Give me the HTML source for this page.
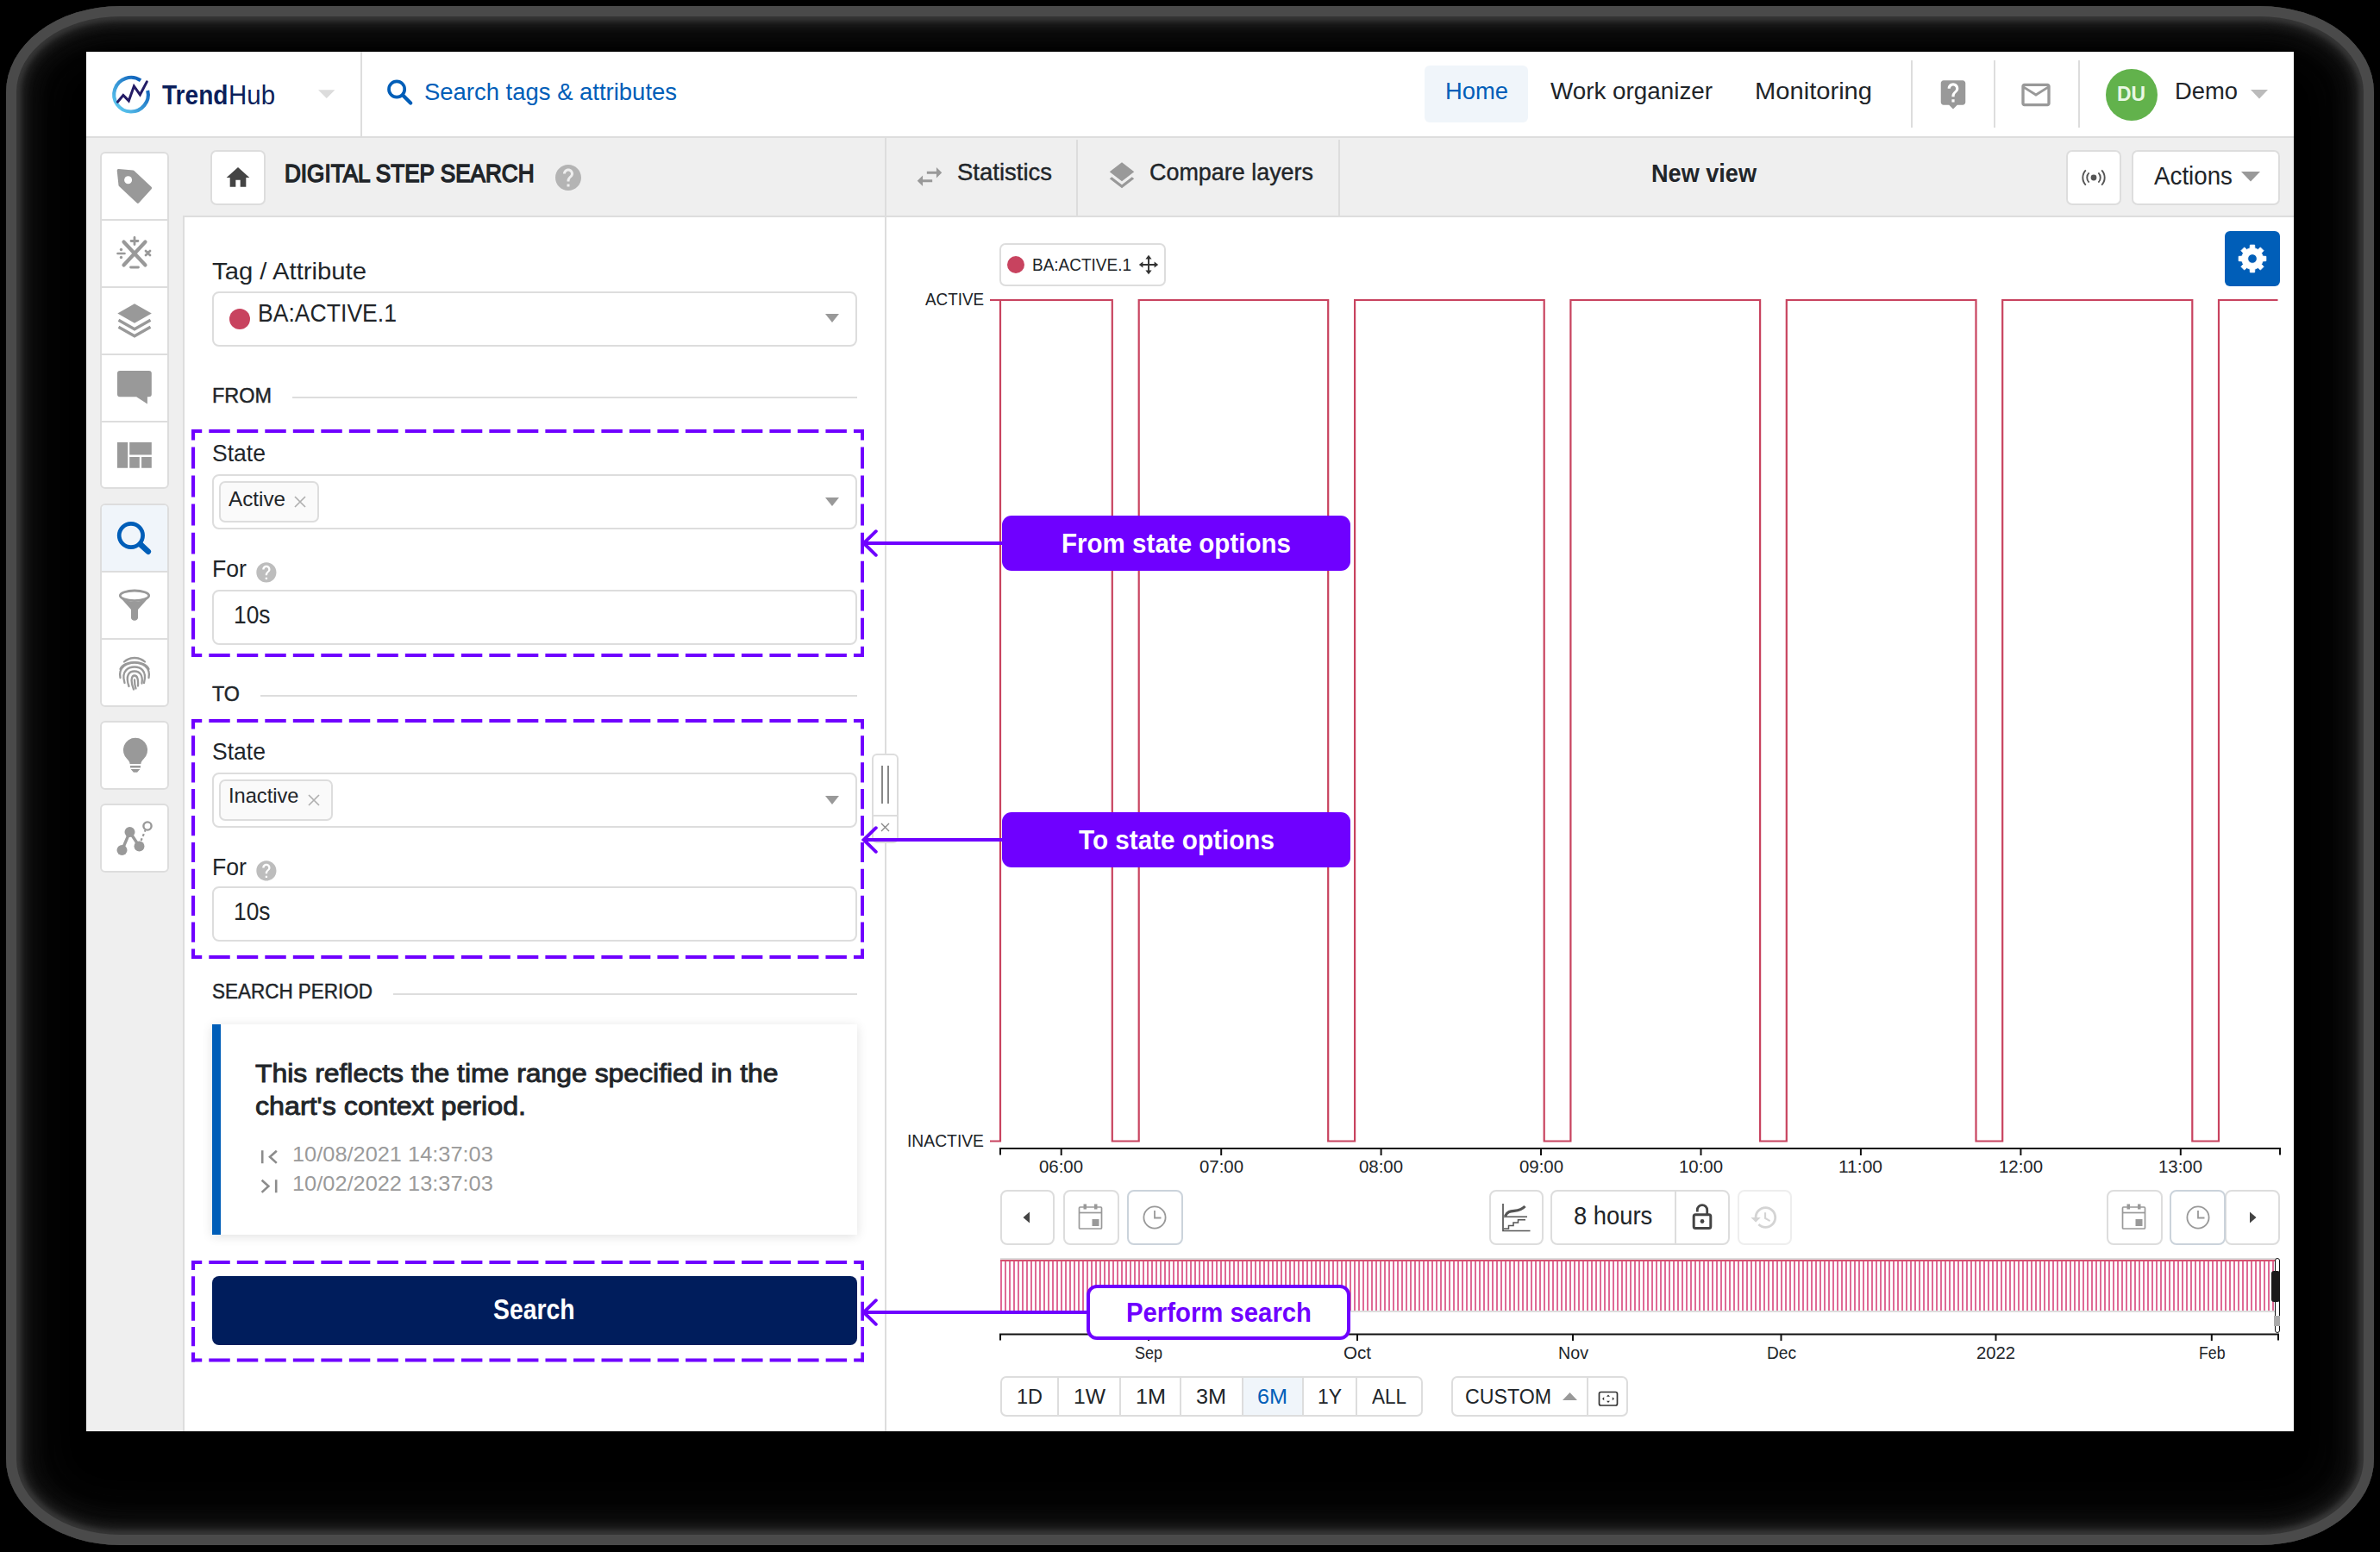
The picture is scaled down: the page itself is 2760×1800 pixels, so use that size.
<!DOCTYPE html>
<html><head><meta charset="utf-8"><title>TrendHub - Digital step search</title>
<style>
html,body{margin:0;padding:0;background:#000;overflow:hidden;}
#stage{position:relative;width:2760px;height:1800px;overflow:hidden;background:#000;font-family:"Liberation Sans", sans-serif;}
#stage div,#stage svg,#stage span.t{position:absolute;box-sizing:border-box;}
span.t{white-space:pre;transform-origin:0 50%;}
.btn{background:#fff;border:2px solid #dddddd;border-radius:6px;}
</style></head>
<body>
<div id="stage">
<div style="left:7px;top:7px;width:2746px;height:1785px;border-radius:132px / 100px;background:#000;box-shadow:inset 0 0 0 12px #4a4a4a, inset 0 0 5px 17px #363636, inset 0 0 8px 23px #1f1f1f, inset 0 0 20px 32px #111111, inset 0 0 40px 52px #070707;"></div>
<div style="left:100px;top:60px;width:2560px;height:1600px;background:#fff;"></div>
<div style="left:100px;top:158px;width:2560px;height:94px;background:#efefef;border-top:2px solid #dddddd;border-bottom:2px solid #dddddd;"></div>
<div style="left:100px;top:160px;width:114px;height:1500px;background:#efefef;"></div>
<div style="left:212px;top:250px;width:2px;height:1410px;background:#dddddd;"></div>
<div style="left:1026px;top:160px;width:2px;height:1500px;background:#dddddd;"></div>
<svg style="left:126px;top:84px;" width="52" height="52" viewBox="126 84 52 52"><defs><linearGradient id="lg" x1="0" y1="1" x2="1" y2="0"><stop offset="0.1" stop-color="#5cc6ee"/><stop offset="0.9" stop-color="#0a5cb8"/></linearGradient></defs>
<path d="M163.07 93.29A19.8 19.8 0 1 0 171.21 104.91" fill="none" stroke="url(#lg)" stroke-width="4.100"/>
<path d="M136.400 118.200L142.900 110.500L149.300 116.900L155.400 100L162.400 109.800L170.300 94.900" fill="none" stroke="#241c66" stroke-width="3" stroke-linejoin="miter" stroke-linecap="round"/></svg>
<span class="t" style="left:188.30px;top:94.68px;font-size:30.5px;line-height:30.5px;color:#0b1f5b;font-weight:700;transform:scaleX(0.9212);">Trend</span>
<span class="t" style="left:265.30px;top:94.68px;font-size:30.5px;line-height:30.5px;color:#0b1f5b;transform:scaleX(0.9651);">Hub</span>
<svg style="left:368.5px;top:104px;" width="19.5" height="10" viewBox="0 0 20 10"><path d="M0 0h20L10 10z" fill="#dcdcdc"/></svg>
<div style="left:418px;top:60px;width:2px;height:98px;background:#dddddd;"></div>
<svg style="left:444px;top:88px;" width="40" height="40" viewBox="444 88 40 40"><circle cx="460.100" cy="103.500" r="9.100" fill="none" stroke="#005eb8" stroke-width="3.700"/><path d="M467 110.300L476.200 119.500" stroke="#005eb8" stroke-width="4.300" stroke-linecap="round"/></svg>
<span class="t" style="left:492.00px;top:92.80px;font-size:28px;line-height:28px;color:#005eb8;transform:scaleX(0.9805);">Search tags &amp; attributes</span>
<div style="left:1652px;top:76px;width:120px;height:66px;background:#f0f5fa;border-radius:6px;"></div>
<span class="t" style="left:1676.00px;top:92.30px;font-size:28px;line-height:28px;color:#005eb8;transform:scaleX(0.9772);">Home</span>
<span class="t" style="left:1798.00px;top:92.30px;font-size:28px;line-height:28px;color:#212529;transform:scaleX(0.9930);">Work organizer</span>
<span class="t" style="left:2035.00px;top:92.30px;font-size:28px;line-height:28px;color:#212529;transform:scaleX(1.0403);">Monitoring</span>
<div style="left:2216px;top:70px;width:2px;height:78px;background:#dddddd;"></div>
<div style="left:2312px;top:70px;width:2px;height:78px;background:#dddddd;"></div>
<div style="left:2410px;top:70px;width:2px;height:78px;background:#dddddd;"></div>
<svg style="left:2245.5px;top:89.5px;" width="38" height="38" viewBox="0 0 24 24"><path fill="#999999" d="M19 2H5c-1.11 0-2 .9-2 2v14c0 1.1.89 2 2 2h4l3 3 3-3h4c1.1 0 2-.9 2-2V4c0-1.1-.9-2-2-2zm-6 16h-2v-2h2v2zm2.07-7.75l-.9.92C13.45 11.9 13 12.5 13 14h-2v-.5c0-1.1.45-2.1 1.17-2.83l1.24-1.26c.37-.36.59-.86.59-1.41 0-1.1-.9-2-2-2s-2 .9-2 2H8c0-2.21 1.79-4 4-4s4 1.79 4 4c0 .88-.36 1.68-.93 2.25z"/></svg>
<svg style="left:2341px;top:89.5px;" width="40" height="40" viewBox="0 0 24 24"><path fill="#999999" d="M20 4H4c-1.1 0-1.99.9-1.99 2L2 18c0 1.1.9 2 2 2h16c1.1 0 2-.9 2-2V6c0-1.1-.9-2-2-2zm0 14H4V8l8 5 8-5v10zm-8-7L4 6h16l-8 5z"/></svg>
<div style="left:2441.5px;top:80px;width:60px;height:60px;background:#62b24c;border-radius:50%;"></div>
<span class="t" style="left:2455.00px;top:96.68px;font-size:24px;line-height:24px;color:#e9f7e4;font-weight:700;transform:scaleX(0.9518);">DU</span>
<span class="t" style="left:2522.00px;top:92.30px;font-size:28px;line-height:28px;color:#212529;transform:scaleX(0.9772);">Demo</span>
<svg style="left:2610px;top:104px;" width="20" height="11" viewBox="0 0 20 11"><path d="M0 0h20L10 10.5z" fill="#bbbbbb"/></svg>
<div class="btn" style="left:244px;top:174px;width:64px;height:64px;border-radius:7px;"></div>
<svg style="left:260px;top:190px;" width="32" height="32" viewBox="0 0 24 24"><path fill="#444444" d="M10 20v-6h4v6h5v-8h3L12 3 2 12h3v8z"/></svg>
<span class="t" style="left:329.50px;top:187.09px;font-size:28.6px;line-height:28.6px;color:#212529;transform:scaleX(0.9125);-webkit-text-stroke:1.500px #212529;">DIGITAL STEP SEARCH</span>
<svg style="left:641px;top:188px;" width="36" height="36" viewBox="0 0 24 24"><path fill="#b4b4b4" d="M12 2C6.48 2 2 6.48 2 12s4.48 10 10 10 10-4.48 10-10S17.52 2 12 2zm1 17h-2v-2h2v2zm2.07-7.75l-.9.92C13.45 12.9 13 13.5 13 15h-2v-.5c0-1.1.45-2.1 1.17-2.83l1.24-1.26c.37-.36.59-.86.59-1.41 0-1.1-.9-2-2-2s-2 .9-2 2H8c0-2.21 1.79-4 4-4s4 1.79 4 4c0 .88-.36 1.68-.93 2.25z"/></svg>
<div style="left:1248px;top:162px;width:2px;height:88px;background:#dddddd;"></div>
<div style="left:1552px;top:162px;width:2px;height:88px;background:#dddddd;"></div>
<svg style="left:1059px;top:186px;" width="38" height="38" viewBox="0 0 24 24"><path fill="#999999" d="M6.99 11L3 15l3.99 4v-3H14v-2H6.99v-3zM21 9l-3.99-4v3H10v2h7.01v3L21 9z"/></svg>
<span class="t" style="left:1110.00px;top:185.80px;font-size:28px;line-height:28px;color:#212529;font-weight:500;transform:scaleX(0.9819);-webkit-text-stroke:0.4px #212529;">Statistics</span>
<svg style="left:1282px;top:185px;" width="38" height="38" viewBox="0 0 24 24"><path fill="#999999" d="M11.99 18.54l-7.37-5.73L3 14.07l9 7 9-7-1.63-1.27-7.38 5.74zM12 16l7.36-5.73L21 9l-9-7-9 7 1.63 1.27L12 16z"/></svg>
<span class="t" style="left:1333.00px;top:185.80px;font-size:28px;line-height:28px;color:#212529;font-weight:500;transform:scaleX(0.9613);-webkit-text-stroke:0.4px #212529;">Compare layers</span>
<span class="t" style="left:1915.00px;top:187.45px;font-size:29px;line-height:29px;color:#212529;font-weight:700;transform:scaleX(0.9344);">New view</span>
<div class="btn" style="left:2396px;top:174px;width:64px;height:64px;border-radius:7px;"></div>
<svg style="left:2410px;top:188px;" width="36" height="36" viewBox="0 0 36 36"><circle cx="18" cy="18" r="3.4" fill="#555"/><path d="M12.6 12.4a7.8 7.8 0 0 0 0 11.2M23.4 12.4a7.8 7.8 0 0 1 0 11.2M8.8 9.4a12.4 12.4 0 0 0 0 17.2M27.2 9.4a12.4 12.4 0 0 1 0 17.2" fill="none" stroke="#555" stroke-width="1.9"/></svg>
<div class="btn" style="left:2472px;top:174px;width:172px;height:64px;border-radius:7px;"></div>
<span class="t" style="left:2498.00px;top:188.60px;font-size:30px;line-height:30px;color:#212529;transform:scaleX(0.9249);">Actions</span>
<svg style="left:2599px;top:199px;" width="22" height="12" viewBox="0 0 22 12"><path d="M0 0h22L11 11.5z" fill="#999999"/></svg>
<div class="btn" style="left:116px;top:176px;width:80px;height:391px;border-radius:6px;"></div>
<div style="left:118px;top:254px;width:76px;height:2px;background:#dddddd;"></div>
<div style="left:118px;top:332px;width:76px;height:2px;background:#dddddd;"></div>
<div style="left:118px;top:410px;width:76px;height:2px;background:#dddddd;"></div>
<div style="left:118px;top:488px;width:76px;height:2px;background:#dddddd;"></div>
<div class="btn" style="left:116px;top:584px;width:80px;height:236px;border-radius:6px;"></div>
<div style="left:118px;top:586px;width:76px;height:76px;background:#f0f5fa;border-radius:4px 4px 0 0;"></div>
<div style="left:118px;top:662px;width:76px;height:2px;background:#dddddd;"></div>
<div style="left:118px;top:740px;width:76px;height:2px;background:#dddddd;"></div>
<div class="btn" style="left:116px;top:836px;width:80px;height:80px;border-radius:6px;"></div>
<div class="btn" style="left:116px;top:932px;width:80px;height:80px;border-radius:6px;"></div>
<svg style="left:130px;top:190px;" width="52" height="52" viewBox="130 190 52 52"><path d="M137.500 197.700L154.300 199.300L174.300 218L159.800 234L139.300 214.800Z" fill="#999999" stroke="#999999" stroke-width="3.600" stroke-linejoin="round"/><circle cx="148.600" cy="208.700" r="4.500" fill="#fff"/></svg>
<svg style="left:134px;top:274px;" width="44" height="40" viewBox="0 0 44 40"><g stroke="#999" fill="none" stroke-linecap="round"><path d="M9.500 6.500L34.500 33.500M34.500 6.500L9.500 33.500" stroke-width="4.200"/><path d="M22 1.500v8M18 5.500h8" stroke-width="2.800"/><path d="M17.500 36h9" stroke-width="2.800"/><path d="M2.500 20h8" stroke-width="2.600"/><path d="M35 17l5 5M40 17l-5 5" stroke-width="2.800"/></g><circle cx="6.500" cy="15.500" r="1.700" fill="#999"/><circle cx="6.500" cy="24.500" r="1.700" fill="#999"/></svg>
<svg style="left:130px;top:346px;" width="52" height="52" viewBox="130 346 52 52"><path d="M136.300 363.500L156 352.200L175.800 363.500L156 374.800Z" fill="#999999"/><path d="M137.500 371.300L156 381.800L174.500 371.300" fill="none" stroke="#999999" stroke-width="3.300"/><path d="M137.500 379.300L156 389.800L174.500 379.300" fill="none" stroke="#999999" stroke-width="3.300"/></svg>
<svg style="left:130px;top:424px;" width="52" height="52" viewBox="130 424 52 52"><path d="M139 430h33.800a3 3 0 0 1 3 3v24.300a3 3 0 0 1 -3 3h-1.900v8.300l-12.700-8.300H139a3 3 0 0 1 -3-3V433a3 3 0 0 1 3-3z" fill="#999999"/></svg>
<svg style="left:130px;top:506px;" width="52" height="44" viewBox="130 506 52 44"><path d="M136 513h12.200v29.800H136zM150.200 513h25.600v14.400h-25.600zM150.200 529.900h11.600v12.900h-11.600zM164.100 529.900h11.700v12.900h-11.700z" fill="#999999"/></svg>
<svg style="left:130px;top:598px;" width="56" height="56" viewBox="130 598 56 56"><circle cx="151.900" cy="621" r="13.700" fill="none" stroke="#005eb8" stroke-width="4.700"/><path d="M163 631.500L171.800 639.700" stroke="#005eb8" stroke-width="6.600" stroke-linecap="round"/></svg>
<svg style="left:136px;top:682px;" width="40" height="40" viewBox="0 0 40 40"><ellipse cx="20" cy="8.800" rx="16.700" ry="5.800" fill="none" stroke="#999" stroke-width="2.800"/><path d="M4 11.500L16 25v9.500c0 2 1.800 3.200 4 3.200s4-1.200 4-3.200V25L36 11.500C31 14.600 26 15.600 20 15.600S9 14.600 4 11.500z" fill="#999"/></svg>
<svg style="left:136px;top:759px;" width="40" height="42" viewBox="0 0 40 42"><g fill="none" stroke="#999" stroke-width="2.300" stroke-linecap="round"><path d="M8 8.500C15 2.500 25 2.500 32 8.500"/><path d="M3.500 17C8 6.500 32 6.500 36.500 17"/><path d="M3.500 27C1 14 12 9.500 20 9.500s19 4.500 16.500 17.500"/><path d="M8.500 33C4 18 14 14.500 20 14.500S35 18 31 33"/><path d="M13.500 37C9 24 14 19.500 20 19.500s10 4.500 8.500 14"/><path d="M19 40.500C15 31 16.500 24.500 20 24.500s4.500 5 4 12"/><path d="M20 29.500c0 4 .5 7 1.500 10"/></g></svg>
<svg style="left:136px;top:850px;" width="42" height="52" viewBox="136 850 42 52"><path d="M157 855.800a14.100 14.100 0 0 1 9.400 24.600c-1.700 1.600-2.700 3-3 5.600h-12.800c-.3-2.600-1.300-4-3-5.600a14.100 14.100 0 0 1 9.400-24.600z" fill="#999999"/><path d="M151 888h12v2.600h-12zM151.600 892h10.800l-3.300 3.700h-4.200z" fill="#999999"/></svg>
<svg style="left:134px;top:950px;" width="44" height="44" viewBox="0 0 44 44"><path d="M7.500 36L16.500 15L27.500 31.500" fill="none" stroke="#999" stroke-width="3.400" stroke-linejoin="round"/><circle cx="7.500" cy="36" r="6" fill="#999"/><circle cx="16.500" cy="15" r="6" fill="#999"/><circle cx="27.500" cy="31.500" r="6" fill="#999"/><path d="M29.500 25l5-12" stroke="#999" stroke-width="2.200" stroke-dasharray="3 2.600" fill="none"/><circle cx="37" cy="8" r="4.600" fill="#fff" stroke="#999" stroke-width="2.400"/></svg>
<span class="t" style="left:246.00px;top:300.80px;font-size:28px;line-height:28px;color:#212529;transform:scaleX(1.0454);">Tag / Attribute</span>
<div class="btn" style="left:246px;top:338px;width:748px;height:64px;border-radius:8px;"></div>
<div style="left:265.5px;top:358px;width:24px;height:24px;background:#c8435f;border-radius:50%;"></div>
<span class="t" style="left:299.00px;top:349.45px;font-size:29px;line-height:29px;color:#212529;transform:scaleX(0.9165);">BA:ACTIVE.1</span>
<svg style="left:957px;top:364px;" width="16" height="10" viewBox="0 0 16 10"><path d="M0 0h16L8 10z" fill="#999999"/></svg>
<span class="t" style="left:246.00px;top:447.26px;font-size:24.5px;line-height:24.5px;color:#212529;transform:scaleX(0.9567);-webkit-text-stroke:0.45px #212529;">FROM</span>
<div style="left:339px;top:460px;width:655px;height:2px;background:#dddddd;"></div>
<span class="t" style="left:246.00px;top:793.46px;font-size:24.5px;line-height:24.5px;color:#212529;transform:scaleX(0.9526);-webkit-text-stroke:0.45px #212529;">TO</span>
<div style="left:302px;top:806px;width:692px;height:2px;background:#dddddd;"></div>
<span class="t" style="left:246.00px;top:1137.86px;font-size:24.5px;line-height:24.5px;color:#212529;transform:scaleX(0.9170);-webkit-text-stroke:0.45px #212529;">SEARCH PERIOD</span>
<div style="left:456px;top:1152px;width:538px;height:2px;background:#dddddd;"></div>
<span class="t" style="left:246.00px;top:512.30px;font-size:28px;line-height:28px;color:#212529;transform:scaleX(0.9481);">State</span>
<div class="btn" style="left:246px;top:550px;width:748px;height:64px;border-radius:8px;"></div>
<div style="left:254px;top:558px;width:115.5px;height:47.5px;background:#fafafa;border:2px solid #dddddd;border-radius:7px;"></div>
<span class="t" style="left:264.50px;top:567.26px;font-size:24.5px;line-height:24.5px;color:#212529;transform:scaleX(0.9892);">Active</span>
<svg style="left:341.0px;top:574.5px;" width="14" height="14" viewBox="0 0 14 14"><path d="M1 1l12 12M13 1l-12 12" stroke="#b0b0b0" stroke-width="1.700" fill="none"/></svg>
<svg style="left:957px;top:577px;" width="16" height="10" viewBox="0 0 16 10"><path d="M0 0h16L8 10z" fill="#999999"/></svg>
<span class="t" style="left:246.00px;top:646.10px;font-size:28px;line-height:28px;color:#212529;transform:scaleX(0.9524);">For</span>
<svg style="left:294.8px;top:650px;" width="27.8" height="27.8" viewBox="0 0 24 24"><path fill="#bdbdbd" d="M12 2C6.48 2 2 6.48 2 12s4.48 10 10 10 10-4.48 10-10S17.52 2 12 2zm1 17h-2v-2h2v2zm2.07-7.750l-.9.920C13.450 12.900 13 13.500 13 15h-2v-.5c0-1.100.450-2.100 1.170-2.830l1.240-1.260c.370-.360.590-.860.590-1.410 0-1.100-.9-2-2-2s-2 .9-2 2H8c0-2.210 1.790-4 4-4s4 1.790 4 4c0 .880-.360 1.680-.930 2.250z"/></svg>
<div class="btn" style="left:246px;top:684px;width:748px;height:64px;border-radius:8px;"></div>
<span class="t" style="left:270.50px;top:699.45px;font-size:29px;line-height:29px;color:#212529;transform:scaleX(0.9088);">10s</span>
<svg style="left:221.9px;top:497.9px;" width="780.20" height="264.10" viewBox="0 0 780.20 264.10"><g fill="none" stroke="#6f00ff" stroke-width="4.1"><path d="M0 2.05H780.20" stroke-dasharray="24.446 8.062" stroke-dashoffset="12.223"/><path d="M0 262.05H780.20" stroke-dasharray="24.446 8.062" stroke-dashoffset="12.223"/><path d="M2.05 0V264.10" stroke-dasharray="24.825 8.187" stroke-dashoffset="12.413"/><path d="M778.15 0V264.10" stroke-dasharray="24.825 8.187" stroke-dashoffset="12.413"/></g></svg>
<span class="t" style="left:246.00px;top:858.30px;font-size:28px;line-height:28px;color:#212529;transform:scaleX(0.9481);">State</span>
<div class="btn" style="left:246px;top:896px;width:748px;height:64px;border-radius:8px;"></div>
<div style="left:254px;top:904px;width:131.5px;height:47.5px;background:#fafafa;border:2px solid #dddddd;border-radius:7px;"></div>
<span class="t" style="left:264.50px;top:911.26px;font-size:24.5px;line-height:24.5px;color:#212529;transform:scaleX(0.9652);">Inactive</span>
<svg style="left:357.0px;top:920.5px;" width="14" height="14" viewBox="0 0 14 14"><path d="M1 1l12 12M13 1l-12 12" stroke="#b0b0b0" stroke-width="1.700" fill="none"/></svg>
<svg style="left:957px;top:923px;" width="16" height="10" viewBox="0 0 16 10"><path d="M0 0h16L8 10z" fill="#999999"/></svg>
<span class="t" style="left:246.00px;top:992.10px;font-size:28px;line-height:28px;color:#212529;transform:scaleX(0.9524);">For</span>
<svg style="left:294.8px;top:996px;" width="27.8" height="27.8" viewBox="0 0 24 24"><path fill="#bdbdbd" d="M12 2C6.48 2 2 6.48 2 12s4.48 10 10 10 10-4.48 10-10S17.52 2 12 2zm1 17h-2v-2h2v2zm2.07-7.750l-.9.920C13.450 12.900 13 13.500 13 15h-2v-.5c0-1.100.450-2.100 1.170-2.830l1.240-1.260c.370-.360.590-.860.590-1.410 0-1.100-.9-2-2-2s-2 .9-2 2H8c0-2.210 1.790-4 4-4s4 1.790 4 4c0 .880-.360 1.680-.930 2.250z"/></svg>
<div class="btn" style="left:246px;top:1028px;width:748px;height:64px;border-radius:8px;"></div>
<span class="t" style="left:270.50px;top:1043.45px;font-size:29px;line-height:29px;color:#212529;transform:scaleX(0.9088);">10s</span>
<svg style="left:221.9px;top:833.9px;" width="780.20" height="278.10" viewBox="0 0 780.20 278.10"><g fill="none" stroke="#6f00ff" stroke-width="4.1"><path d="M0 2.05H780.20" stroke-dasharray="24.446 8.062" stroke-dashoffset="12.223"/><path d="M0 276.05H780.20" stroke-dasharray="24.446 8.062" stroke-dashoffset="12.223"/><path d="M2.05 0V278.10" stroke-dasharray="23.237 7.663" stroke-dashoffset="11.618"/><path d="M778.15 0V278.10" stroke-dasharray="23.237 7.663" stroke-dashoffset="11.618"/></g></svg>
<div style="left:245.7px;top:1188px;width:748.3px;height:244px;background:#fff;box-shadow:0 2px 12px rgba(0,0,0,0.12);"></div>
<div style="left:245.7px;top:1188px;width:10.4px;height:244px;background:#005eb8;"></div>
<span class="t" style="left:296.40px;top:1230.31px;font-size:30px;line-height:30px;color:#212529;transform:scaleX(1.0635);-webkit-text-stroke:0.9px #212529;">This reflects the time range specified in the</span>
<span class="t" style="left:296.40px;top:1267.81px;font-size:30px;line-height:30px;color:#212529;transform:scaleX(1.0733);-webkit-text-stroke:0.9px #212529;">chart's context period.</span>
<svg style="left:300px;top:1330px;" width="26" height="24" viewBox="0 0 26 24"><path d="M4.200 4.300v15M20.800 4.700L13 11.800l7.800 7.100" fill="none" stroke="#8c8c8c" stroke-width="2.600"/></svg>
<svg style="left:300px;top:1364px;" width="26" height="24" viewBox="0 0 26 24"><path d="M20.200 4.300v15M3.600 4.700L11.400 11.800l-7.800 7.100" fill="none" stroke="#8c8c8c" stroke-width="2.600"/></svg>
<span class="t" style="left:339.30px;top:1326.76px;font-size:24.5px;line-height:24.5px;color:#9a9a9a;transform:scaleX(1.0356);">10/08/2021 14:37:03</span>
<span class="t" style="left:339.30px;top:1361.06px;font-size:24.5px;line-height:24.5px;color:#9a9a9a;transform:scaleX(1.0356);">10/02/2022 13:37:03</span>
<div style="left:246px;top:1480px;width:748px;height:80px;background:#001d5c;border-radius:8px;"></div>
<span class="t" style="left:572.45px;top:1502.99px;font-size:32.5px;line-height:32.5px;color:#ffffff;font-weight:700;transform:scaleX(0.8717);">Search</span>
<svg style="left:221.9px;top:1462.1px;" width="780.40" height="117.50" viewBox="0 0 780.40 117.50"><g fill="none" stroke="#6f00ff" stroke-width="4.1"><path d="M0 2.05H780.40" stroke-dasharray="24.453 8.064" stroke-dashoffset="12.226"/><path d="M0 115.45H780.40" stroke-dasharray="24.453 8.064" stroke-dashoffset="12.226"/><path d="M2.05 0V117.50" stroke-dasharray="22.090 7.285" stroke-dashoffset="11.045"/><path d="M778.35 0V117.50" stroke-dasharray="22.090 7.285" stroke-dashoffset="11.045"/></g></svg>
<div style="left:2580px;top:268px;width:64px;height:64px;background:#005eb8;border-radius:6px;"></div>
<svg style="left:2590px;top:278px;" width="44" height="44" viewBox="2590 278 44 44"><path d="M2609.11 287.94L2609.34 284.12L2614.66 284.12L2614.89 287.94A12.4 12.4 0 0 1 2618.48 289.43L2621.35 286.89L2625.11 290.65L2622.57 293.52A12.4 12.4 0 0 1 2624.06 297.11L2627.88 297.34L2627.88 302.66L2624.06 302.89A12.4 12.4 0 0 1 2622.57 306.48L2625.11 309.35L2621.35 313.11L2618.48 310.57A12.4 12.4 0 0 1 2614.89 312.06L2614.66 315.88L2609.34 315.88L2609.11 312.06A12.4 12.4 0 0 1 2605.52 310.57L2602.65 313.11L2598.89 309.35L2601.43 306.48A12.4 12.4 0 0 1 2599.94 302.89L2596.12 302.66L2596.12 297.34L2599.94 297.11A12.4 12.4 0 0 1 2601.43 293.52L2598.89 290.65L2602.65 286.89L2605.52 289.43A12.4 12.4 0 0 1 2609.11 287.94ZM2617.3 300a5.3 5.3 0 1 0 -10.6 0a5.3 5.3 0 1 0 10.6 0Z" fill="#fff" fill-rule="evenodd" stroke="#fff" stroke-width="0.800" stroke-linejoin="round"/></svg>
<div class="btn" style="left:1159px;top:282px;width:193px;height:50px;border-radius:7px;"></div>
<div style="left:1167.5px;top:296.5px;width:20px;height:20px;background:#c8435f;border-radius:50%;"></div>
<span class="t" style="left:1196.50px;top:295.52px;font-size:21px;line-height:21px;color:#212529;transform:scaleX(0.9040);">BA:ACTIVE.1</span>
<svg style="left:1320px;top:295px;" width="24" height="24" viewBox="0 0 24 24"><g fill="none" stroke="#333" stroke-width="1.900"><path d="M12 2.500v19M2.500 12h19"/></g><path d="M12 0.800l3.600 4.600h-7.200zM12 23.200l3.600-4.600h-7.200zM0.800 12l4.600-3.600v7.200zM23.200 12l-4.600-3.600v7.200z" fill="#333"/></svg>
<span class="t" style="left:1073.00px;top:336.42px;font-size:21px;line-height:21px;color:#212529;transform:scaleX(0.8964);">ACTIVE</span>
<span class="t" style="left:1052.00px;top:1312.02px;font-size:21px;line-height:21px;color:#212529;transform:scaleX(0.9189);">INACTIVE</span>
<svg style="left:1140px;top:340px;" width="1510" height="1000" viewBox="1140 340 1510 1000"><path d="M1148 348H1160" stroke="#c8435f" stroke-width="2" fill="none"/><path d="M1148.0 1323.5 L1160.0 1323.5 L1160.0 348.0 L1289.8 348.0 L1289.8 1323.5 L1320.7 1323.5 L1320.7 348.0 L1540.2 348.0 L1540.2 1323.5 L1571.1 1323.5 L1571.1 348.0 L1790.7 348.0 L1790.7 1323.5 L1821.4 1323.5 L1821.4 348.0 L2041.1 348.0 L2041.1 1323.5 L2071.8 1323.5 L2071.8 348.0 L2291.5 348.0 L2291.5 1323.5 L2322.2 1323.5 L2322.2 348.0 L2542.3 348.0 L2542.3 1323.5 L2573.0 1323.5 L2573.0 348.0 L2641.5 348.0" fill="none" stroke="#c8435f" stroke-width="2.200" stroke-linejoin="miter"/></svg>
<svg style="left:1150px;top:1325px;" width="1500" height="20" viewBox="1150 1325 1500 20"><path d="M1160 1339.500V1332H2644V1339.500" fill="none" stroke="#111" stroke-width="2"/><path d="M1230.7 1332v8" stroke="#111" stroke-width="2"/><path d="M1416.2 1332v8" stroke="#111" stroke-width="2"/><path d="M1601.6 1332v8" stroke="#111" stroke-width="2"/><path d="M1787.0 1332v8" stroke="#111" stroke-width="2"/><path d="M1972.5 1332v8" stroke="#111" stroke-width="2"/><path d="M2157.9 1332v8" stroke="#111" stroke-width="2"/><path d="M2343.4 1332v8" stroke="#111" stroke-width="2"/><path d="M2528.8 1332v8" stroke="#111" stroke-width="2"/></svg>
<span class="t" style="left:1205.20px;top:1342.65px;font-size:20.5px;line-height:20.5px;color:#212529;transform:scaleX(0.9939);">06:00</span>
<span class="t" style="left:1390.65px;top:1342.65px;font-size:20.5px;line-height:20.5px;color:#212529;transform:scaleX(0.9939);">07:00</span>
<span class="t" style="left:1576.10px;top:1342.65px;font-size:20.5px;line-height:20.5px;color:#212529;transform:scaleX(0.9939);">08:00</span>
<span class="t" style="left:1761.55px;top:1342.65px;font-size:20.5px;line-height:20.5px;color:#212529;transform:scaleX(0.9939);">09:00</span>
<span class="t" style="left:1947.00px;top:1342.65px;font-size:20.5px;line-height:20.5px;color:#212529;transform:scaleX(0.9939);">10:00</span>
<span class="t" style="left:2132.45px;top:1342.65px;font-size:20.5px;line-height:20.5px;color:#212529;transform:scaleX(1.0245);">11:00</span>
<span class="t" style="left:2317.90px;top:1342.65px;font-size:20.5px;line-height:20.5px;color:#212529;transform:scaleX(0.9939);">12:00</span>
<span class="t" style="left:2503.35px;top:1342.65px;font-size:20.5px;line-height:20.5px;color:#212529;transform:scaleX(0.9939);">13:00</span>
<div class="btn" style="left:1160px;top:1380px;width:63px;height:64px;border-radius:8px;"></div>
<svg style="left:1185px;top:1404px;" width="10" height="16" viewBox="0 0 10 16"><path d="M9 1.500v13L1.500 8z" fill="#444"/></svg>
<div class="btn" style="left:1232.5px;top:1380px;width:65px;height:64px;border-radius:8px;"></div>
<svg style="left:1249.5px;top:1395.5px;" width="30" height="31" viewBox="0 0 30 31"><g fill="none" stroke="#999" stroke-width="1.700"><rect x="1.500" y="4" width="26" height="25" rx="1"/><path d="M1.500 10.500h26"/></g><path d="M6.500 0.500h3.500v6h-3.500zM19 0.500h3.500v6H19z" fill="#999"/><rect x="16.500" y="18" width="8" height="8" fill="#999"/></svg>
<div class="btn" style="left:1306.5px;top:1380px;width:65px;height:64px;border-radius:8px;border-color:#cbd3db;"></div>
<svg style="left:1325px;top:1397.5px;" width="28" height="28" viewBox="0 0 28 28"><circle cx="14" cy="14" r="12.600" fill="none" stroke="#999" stroke-width="1.800"/><path d="M14 6v8.500h7.500" fill="none" stroke="#999" stroke-width="1.800"/></svg>
<div class="btn" style="left:1726.5px;top:1380px;width:63px;height:64px;border-radius:8px;"></div>
<svg style="left:1741px;top:1395px;" width="34" height="34" viewBox="0 0 34 34"><g fill="none" stroke="#555"><path d="M2 1v31.500h31.500" stroke-width="1.700"/><path d="M4.500 15.500C9 5 19 13.500 27.500 4" stroke-width="3.200"/><path d="M3 16.200h27" stroke-width="1.500"/><path d="M3 30h5.500v-3.500H14V23h5.500v-3.200h8.500" stroke-width="1.500"/></g></svg>
<div class="btn" style="left:1798px;top:1380px;width:208px;height:64px;border-radius:8px;"></div>
<div style="left:1942px;top:1382px;width:2px;height:60px;background:#dddddd;"></div>
<span class="t" style="left:1825.20px;top:1394.53px;font-size:29.5px;line-height:29.5px;color:#212529;transform:scaleX(0.9278);">8 hours</span>
<svg style="left:1958px;top:1394px;" width="34" height="34" viewBox="0 0 34 34"><rect x="6.200" y="14.800" width="19.600" height="15.800" rx="2" fill="none" stroke="#444" stroke-width="3"/><circle cx="16" cy="22.500" r="2.400" fill="#444"/><path d="M10.300 11.500V9.300a5.700 5.700 0 0 1 11.400 0V14.500" fill="none" stroke="#444" stroke-width="2.800"/></svg>
<div class="btn" style="left:2014.5px;top:1380px;width:63px;height:64px;border-radius:8px;border-color:#eeeeee;"></div>
<svg style="left:2029px;top:1395px;" width="34" height="34" viewBox="0 0 24 24"><path fill="#d4d4d4" d="M13 3c-4.970 0-9 4.030-9 9H1l3.890 3.890.07.140L9 12H6c0-3.870 3.130-7 7-7s7 3.130 7 7-3.130 7-7 7c-1.930 0-3.680-.790-4.940-2.060l-1.420 1.420C8.270 19.990 10.510 21 13 21c4.970 0 9-4.030 9-9s-4.030-9-9-9zm-1 5v5l4.280 2.540.72-1.210-3.500-2.080V8H12z"/></svg>
<div class="btn" style="left:2442.5px;top:1380px;width:65px;height:64px;border-radius:8px;"></div>
<svg style="left:2459.5px;top:1395.5px;" width="30" height="31" viewBox="0 0 30 31"><g fill="none" stroke="#999" stroke-width="1.700"><rect x="1.500" y="4" width="26" height="25" rx="1"/><path d="M1.500 10.500h26"/></g><path d="M6.500 0.500h3.500v6h-3.500zM19 0.500h3.500v6H19z" fill="#999"/><rect x="16.500" y="18" width="8" height="8" fill="#999"/></svg>
<div class="btn" style="left:2580px;top:1380px;width:64px;height:64px;border-radius:8px;"></div>
<div class="btn" style="left:2516px;top:1380px;width:65px;height:64px;border-radius:8px;border-color:#cbd3db;"></div>
<svg style="left:2534.5px;top:1397.5px;" width="28" height="28" viewBox="0 0 28 28"><circle cx="14" cy="14" r="12.600" fill="none" stroke="#999" stroke-width="1.800"/><path d="M14 6v8.500h7.500" fill="none" stroke="#999" stroke-width="1.800"/></svg>
<svg style="left:2608px;top:1404px;" width="10" height="16" viewBox="0 0 10 16"><path d="M1 1.500v13L8.500 8z" fill="#444"/></svg>
<div style="left:1160px;top:1459px;width:1482px;height:63px;border-top:2px solid #dddddd;border-bottom:2px solid #dddddd;background:linear-gradient(#d5506f,#d5506f) 0 0/100% 2px no-repeat, repeating-linear-gradient(to right,#df6a96 0,#df6a96 2px,#ffffff 2px,#ffffff 5px);"></div>
<div style="left:2638px;top:1458.5px;width:5.5px;height:87px;border:1.500px solid #111;border-radius:3px;background:#fff;"></div>
<div style="left:2634px;top:1474px;width:10px;height:36px;background:#1a1a1a;border-radius:3px;"></div>
<div style="left:2637px;top:1526px;width:6.5px;height:12px;background:#aaaaaa;"></div>
<svg style="left:1150px;top:1540px;" width="1500" height="20" viewBox="1150 1540 1500 20"><path d="M1160 1554.500V1547.500H2642V1554.500" fill="none" stroke="#111" stroke-width="2"/><path d="M1332.0 1547.500v7.500" stroke="#111" stroke-width="2"/><path d="M1574.0 1547.500v7.500" stroke="#111" stroke-width="2"/><path d="M1824.0 1547.500v7.500" stroke="#111" stroke-width="2"/><path d="M2065.5 1547.500v7.500" stroke="#111" stroke-width="2"/><path d="M2314.5 1547.500v7.500" stroke="#111" stroke-width="2"/><path d="M2564.8 1547.500v7.500" stroke="#111" stroke-width="2"/></svg>
<span class="t" style="left:1316.00px;top:1559.71px;font-size:19.6px;line-height:19.6px;color:#212529;transform:scaleX(0.9176);">Sep</span>
<span class="t" style="left:1558.00px;top:1559.71px;font-size:19.6px;line-height:19.6px;color:#212529;transform:scaleX(1.0497);">Oct</span>
<span class="t" style="left:1806.50px;top:1559.71px;font-size:19.6px;line-height:19.6px;color:#212529;transform:scaleX(1.0040);">Nov</span>
<span class="t" style="left:2048.50px;top:1559.71px;font-size:19.6px;line-height:19.6px;color:#212529;transform:scaleX(0.9753);">Dec</span>
<span class="t" style="left:2292.00px;top:1559.71px;font-size:19.6px;line-height:19.6px;color:#212529;transform:scaleX(1.0323);">2022</span>
<span class="t" style="left:2549.55px;top:1559.71px;font-size:19.6px;line-height:19.6px;color:#212529;transform:scaleX(0.9033);">Feb</span>
<div class="btn" style="left:1160px;top:1596px;width:490px;height:47px;border-radius:7px;"></div>
<div style="left:1442px;top:1598px;width:68px;height:43px;background:#f0f5fa;"></div>
<div style="left:1226px;top:1598px;width:2px;height:43px;background:#dddddd;"></div>
<div style="left:1298px;top:1598px;width:2px;height:43px;background:#dddddd;"></div>
<div style="left:1368px;top:1598px;width:2px;height:43px;background:#dddddd;"></div>
<div style="left:1440px;top:1598px;width:2px;height:43px;background:#dddddd;"></div>
<div style="left:1510px;top:1598px;width:2px;height:43px;background:#dddddd;"></div>
<div style="left:1572px;top:1598px;width:2px;height:43px;background:#dddddd;"></div>
<span class="t" style="left:1178.50px;top:1607.68px;font-size:24px;line-height:24px;color:#212529;transform:scaleX(0.9776);">1D</span>
<span class="t" style="left:1244.50px;top:1607.68px;font-size:24px;line-height:24px;color:#212529;transform:scaleX(1.0278);">1W</span>
<span class="t" style="left:1316.50px;top:1607.68px;font-size:24px;line-height:24px;color:#212529;transform:scaleX(1.0497);">1M</span>
<span class="t" style="left:1387.00px;top:1607.68px;font-size:24px;line-height:24px;color:#212529;transform:scaleX(1.0497);">3M</span>
<span class="t" style="left:1457.50px;top:1607.68px;font-size:24px;line-height:24px;color:#005eb8;transform:scaleX(1.0497);">6M</span>
<span class="t" style="left:1527.50px;top:1607.68px;font-size:24px;line-height:24px;color:#212529;transform:scaleX(0.9537);">1Y</span>
<span class="t" style="left:1590.50px;top:1607.68px;font-size:24px;line-height:24px;color:#212529;transform:scaleX(0.9367);">ALL</span>
<div class="btn" style="left:1682.5px;top:1596px;width:205px;height:47px;border-radius:7px;"></div>
<div style="left:1840px;top:1598px;width:2px;height:43px;background:#dddddd;"></div>
<span class="t" style="left:1699.00px;top:1607.68px;font-size:24px;line-height:24px;color:#212529;transform:scaleX(0.9656);">CUSTOM</span>
<svg style="left:1812px;top:1615px;" width="17" height="9" viewBox="0 0 17 9"><path d="M0 9h17L8.500 0z" fill="#999"/></svg>
<svg style="left:1853px;top:1611.5px;" width="24" height="20" viewBox="0 0 24 20"><rect x="1.500" y="2.500" width="21" height="15.500" rx="2" fill="none" stroke="#333" stroke-width="1.700"/><path d="M12 5.500l2 2.200h-4zM12 15l2-2.200h-4zM5 10.200l2.200-2v4zM19 10.200l-2.200-2v4z" fill="#333"/></svg>
<div style="left:1010.5px;top:874px;width:31px;height:104px;background:#fff;border:2px solid #dddddd;border-radius:6px;"></div>
<div style="left:1012.5px;top:945px;width:27px;height:2px;background:#dddddd;"></div>
<div style="left:1022px;top:888px;width:1.5px;height:44px;background:#888;"></div>
<div style="left:1029px;top:888px;width:1.5px;height:44px;background:#888;"></div>
<svg style="left:1021px;top:954px;" width="11" height="11" viewBox="0 0 11 11"><path d="M1 1l9 9M10 1l-9 9" stroke="#888" stroke-width="1.400" fill="none"/></svg>
<svg style="left:994px;top:612px;" width="172" height="36" viewBox="994 612 172 36"><path d="M1001 630H1164" stroke="#6f00ff" stroke-width="3.900" fill="none"/><path d="M1015.800 616.2L1001.600 630L1015.800 643.8" stroke="#6f00ff" stroke-width="3.900" fill="none" stroke-linecap="round" stroke-linejoin="miter"/></svg>
<div style="left:1162px;top:598px;width:404px;height:64px;background:#6f00ff;border-radius:11px;"></div>
<span class="t" style="left:1231.00px;top:614.76px;font-size:31px;line-height:31px;color:#ffffff;font-weight:700;transform:scaleX(0.9534);">From state options</span>
<svg style="left:994px;top:955.8px;" width="172" height="36" viewBox="994 955.8 172 36"><path d="M1001 973.8H1164" stroke="#6f00ff" stroke-width="3.900" fill="none"/><path d="M1015.800 960.0L1001.600 973.8L1015.800 987.5999999999999" stroke="#6f00ff" stroke-width="3.900" fill="none" stroke-linecap="round" stroke-linejoin="miter"/></svg>
<div style="left:1162px;top:942px;width:404px;height:64px;background:#6f00ff;border-radius:11px;"></div>
<span class="t" style="left:1250.50px;top:958.76px;font-size:31px;line-height:31px;color:#ffffff;font-weight:700;transform:scaleX(0.9574);">To state options</span>
<svg style="left:994px;top:1503.8px;" width="272" height="36" viewBox="994 1503.8 272 36"><path d="M1001 1521.8H1264" stroke="#6f00ff" stroke-width="3.900" fill="none"/><path d="M1015.800 1508.0L1001.600 1521.8L1015.800 1535.6" stroke="#6f00ff" stroke-width="3.900" fill="none" stroke-linecap="round" stroke-linejoin="miter"/></svg>
<div style="left:1260px;top:1490px;width:305.5px;height:64px;background:#fff;border:4px solid #6f00ff;border-radius:12px;"></div>
<span class="t" style="left:1305.50px;top:1506.76px;font-size:31px;line-height:31px;color:#6f00ff;font-weight:700;transform:scaleX(0.9452);">Perform search</span>
</div>
</body></html>
